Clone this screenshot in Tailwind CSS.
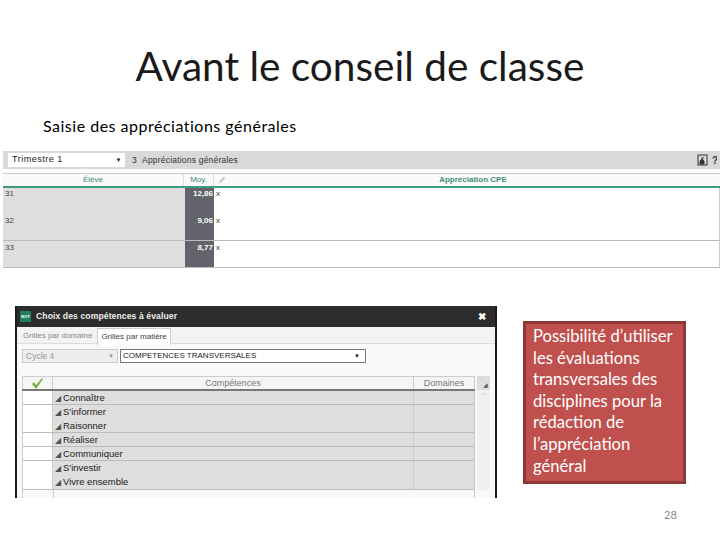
<!DOCTYPE html>
<html lang="fr">
<head>
    <meta charset="UTF-8">
    <title>Avant le conseil de classe</title>
    <script src="https://cdn.jsdelivr.net/npm/@tailwindcss/browser@4"></script>
</head>
<body class="w-[720px] h-[540px] overflow-hidden bg-white font-['Lato',sans-serif]">
    <!-- Titre -->
    <h1 class="pt-[41px] h-[100px] text-center text-[40.6px] leading-[50px] text-[#1a1a1a]">Avant le conseil de classe</h1>
    <p class="pl-[43px] pt-[16px] h-[50px] text-[16px] leading-[20px] tracking-[0.5px] text-black">Saisie des appréciations générales</p>

    <!-- Capture appreciations -->
    <div class="ml-[3px] w-[717px] h-[120px] font-['Liberation_Sans',sans-serif]">
        <div class="flex items-center h-[18px] mt-[1px] bg-[#d8d9da] pl-[5px] pr-[3px] text-[8.5px] text-[#333]">
            <div class="flex items-center justify-between w-[117px] h-[14px] bg-white pl-[4px] pr-[3px] text-[9px] tracking-[0.5px] text-[#222]">
                <span>Trimestre 1</span><span class="text-[6px]">▼</span>
            </div>
            <span class="ml-[7px] tracking-[0.2px]">3 &nbsp;Appréciations générales</span>
            <svg class="ml-auto" width="12" height="12" viewBox="0 0 12 12"><rect x="1" y="1" width="9" height="10" fill="none" stroke="#333"/><path d="M3 10V7l2-2 2 2v3zM4 4h3" fill="#333" stroke="#333"/></svg>
            <span class="ml-[3px] w-[5px] overflow-hidden text-[10px] font-bold">?</span>
        </div>
        <div class="flex h-[12px] mt-[4px] border-t border-[#ccc] border-b-2 border-b-[#3f9a7f] bg-[#fafafa] text-[8px] text-[#3c8a72] box-content">
            <div class="w-[181px] text-center leading-[12px] border-r border-[#ddd]">Élève</div>
            <div class="w-[30px] text-center leading-[12px] border-r border-[#ddd]">Moy.</div>
            <svg class="ml-[2px]" width="12" height="12" viewBox="0 0 12 14"><path d="M2 11l1-3 5-5 2 2-5 5z" fill="#ccc"/></svg>
            <div class="flex-1 text-center leading-[12px] pr-[2px] text-[#3f8f78] font-bold">Appréciation CPE</div>
        </div>
        <div class="flex flex-col border-r border-[#ccc] text-[8px]">
            <div class="flex h-[26px]">
                <div class="w-[182px] pl-[2px] bg-[#dedede] text-[#444] leading-[12px]">31</div>
                <div class="w-[29px] pr-[1px] bg-[#62636b] text-right text-white font-bold leading-[12px]">12,86</div>
                <div class="pl-[2px] leading-[12px] text-[#333]">x</div>
            </div>
            <div class="flex h-[26px] border-b border-[#bbb] box-content">
                <div class="w-[182px] pl-[2px] bg-[#dedede] text-[#444] leading-[14px]">32</div>
                <div class="w-[29px] pr-[1px] bg-[#62636b] text-right text-white font-bold leading-[14px]">9,06</div>
                <div class="pl-[2px] leading-[14px] text-[#333]">x</div>
            </div>
            <div class="flex h-[26px] border-b border-[#bbb] box-content">
                <div class="w-[182px] pl-[2px] bg-[#dedede] text-[#444] leading-[14px]">33</div>
                <div class="w-[29px] pr-[1px] bg-[#62636b] text-right text-white font-bold leading-[14px]">8,77</div>
                <div class="pl-[2px] leading-[14px] text-[#333]">x</div>
            </div>
        </div>
    </div>

    <div class="flex pt-[35px]">
        <!-- Fenetre choix des competences -->
        <div class="ml-[15px] w-[482px] h-[192px] overflow-hidden border-x-2 border-[#1c1c1c] bg-[#f9f9f9] font-['Liberation_Sans',sans-serif] text-[9px] text-[#333]">
            <div class="flex items-center h-[21px] -mx-[2px] bg-[#2d2d2d] pl-[5px] pr-[11px] text-white">
                <span class="w-[11px] h-[11px] bg-[#1f7f62] text-[4px] leading-[11px] text-center font-bold">BOT</span>
                <span class="ml-[5px] text-[8.6px] font-bold tracking-[0.1px] text-[#eee]">Choix des compétences à évaluer</span>
                <span class="ml-auto text-[10px] font-bold">✖</span>
            </div>
            <div class="flex h-[17px] pl-[4px] pt-[1px] border-b border-[#ddd] bg-[#f3f3f3] text-[8px]">
                <div class="px-[2px] leading-[15px] text-[#888]">Grilles par domaine</div>
                <div class="ml-[3px] px-[3px] leading-[15px] bg-white border-x border-t border-[#ccc] h-[17px] text-[#444]">Grilles par matière</div>
            </div>
            <div class="flex items-center h-[14px] mt-[5px] ml-[5px]">
                <div class="flex justify-between w-[96px] h-[14px] px-[3px] border border-[#ccc] bg-[#eee] text-[8.5px] text-[#999] leading-[12px]"><span>Cycle 4</span><span class="text-[6px]">▼</span></div>
                <div class="flex justify-between ml-[2px] w-[246px] h-[14px] pl-[2px] pr-[5px] border border-[#777] bg-white text-[8px] text-[#222] leading-[12px]"><span>COMPETENCES TRANSVERSALES</span><span class="text-[6px]">▼</span></div>
            </div>
            <div class="flex ml-[5px] mt-[13px]">
                <div class="w-[453px]">
                    <div class="flex h-[13px] border-t border-x border-[#ccc] bg-[#f5f5f5] text-[#777] leading-[12px]">
                        <div class="flex justify-center items-center w-[30px] border-r border-[#ccc]">
                            <svg width="13" height="11" viewBox="0 0 13 11"><path d="M1 6l2-2 2 3 6-7 1 1-7 10z" fill="#7cb342"/></svg>
                        </div>
                        <div class="w-[361px] text-center border-r border-[#ccc]">Compétences</div>
                        <div class="flex-1 text-center">Domaines</div>
                    </div>
                    <div class="h-[2px] bg-[#777]"></div>
                    <div class="flex flex-col border-x border-[#ccc] text-[9.5px] leading-[14px] text-[#222]">
                        <div class="flex h-[14px] border-b border-[#bbb]"><div class="w-[30px] bg-white border-r border-[#ccc]"></div><div class="w-[361px] pl-[2px] bg-[#dedede] border-r border-[#ccc]"><span class="inline-block w-[8px] text-[8px] text-[#555]">◢</span>Connaître</div><div class="flex-1 bg-[#dedede]"></div></div>
                        <div class="flex h-[14px]"><div class="w-[30px] bg-white border-r border-[#ccc]"></div><div class="w-[361px] pl-[2px] bg-[#dedede] border-r border-[#ccc]"><span class="inline-block w-[8px] text-[8px] text-[#555]">◢</span>S'informer</div><div class="flex-1 bg-[#dedede]"></div></div>
                        <div class="flex h-[14px] border-b border-[#bbb]"><div class="w-[30px] bg-white border-r border-[#ccc]"></div><div class="w-[361px] pl-[2px] bg-[#dedede] border-r border-[#ccc]"><span class="inline-block w-[8px] text-[8px] text-[#555]">◢</span>Raisonner</div><div class="flex-1 bg-[#dedede]"></div></div>
                        <div class="flex h-[14px] border-b border-[#bbb]"><div class="w-[30px] bg-white border-r border-[#ccc]"></div><div class="w-[361px] pl-[2px] bg-[#dedede] border-r border-[#ccc]"><span class="inline-block w-[8px] text-[8px] text-[#555]">◢</span>Réaliser</div><div class="flex-1 bg-[#dedede]"></div></div>
                        <div class="flex h-[14px] border-b border-[#bbb]"><div class="w-[30px] bg-white border-r border-[#ccc]"></div><div class="w-[361px] pl-[2px] bg-[#dedede] border-r border-[#ccc]"><span class="inline-block w-[8px] text-[8px] text-[#555]">◢</span>Communiquer</div><div class="flex-1 bg-[#dedede]"></div></div>
                        <div class="flex h-[14px]"><div class="w-[30px] bg-white border-r border-[#ccc]"></div><div class="w-[361px] pl-[2px] bg-[#dedede] border-r border-[#ccc]"><span class="inline-block w-[8px] text-[8px] text-[#555]">◢</span>S'investir</div><div class="flex-1 bg-[#dedede]"></div></div>
                        <div class="flex h-[15px] border-b border-[#bbb]"><div class="w-[30px] bg-white border-r border-[#ccc]"></div><div class="w-[361px] pl-[2px] bg-[#dedede] border-r border-[#ccc]"><span class="inline-block w-[8px] text-[8px] text-[#555]">◢</span>Vivre ensemble</div><div class="flex-1 bg-[#dedede]"></div></div>
                        <div class="h-[8px] w-[31px] border-r border-[#ccc]"></div>
                    </div>
                </div>
                <div class="ml-[2px] w-[13px]">
                    <div class="flex justify-end items-end h-[14px] pr-[2px] pb-[2px] bg-[#ddd] text-[6px] leading-none text-[#555]">◢</div>
                    <div class="h-[100px] bg-[#f0f0f0] text-center text-[7px] text-[#bbb]">^</div>
                </div>
            </div>
        </div>

        <!-- Encadre rouge -->
        <div class="ml-[26px] mt-[15px] w-[163px] h-[163px] border-[3px] border-[#8c3836] bg-[#c0504d] pl-[7px] pt-[2px] text-[16.6px] leading-[21.6px] text-white">
            Possibilité d’utiliser les évaluations transversales des disciplines pour la rédaction de l’appréciation général
        </div>
    </div>

    <!-- Numero de page -->
    <div class="absolute top-[508px] left-[664px] text-[11px] leading-[14px] text-[#888]">28</div>
</body>
</html>
